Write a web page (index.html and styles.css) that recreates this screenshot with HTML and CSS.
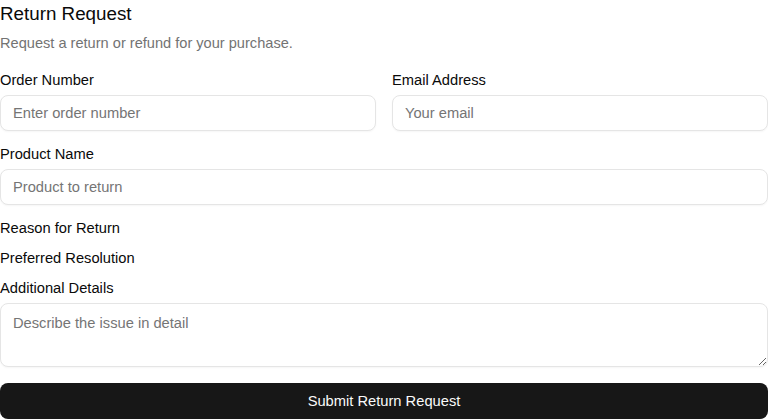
FILE: index.html
```html
<!DOCTYPE html>
<html>
<head>
<meta charset="utf-8">
<link rel="stylesheet" href="styles.css">
</head>
<body>
<form class="form">
  <h1 class="title">Return Request</h1>
  <p class="subtitle">Request a return or refund for your purchase.</p>
  <div class="row">
    <div class="field">
      <label class="label">Order Number</label>
      <input class="input" type="text" placeholder="Enter order number">
    </div>
    <div class="field">
      <label class="label">Email Address</label>
      <input class="input" type="email" placeholder="Your email">
    </div>
  </div>
  <div class="field">
    <label class="label">Product Name</label>
    <input class="input" type="text" placeholder="Product to return">
  </div>
  <div class="field">
    <label class="label label-only">Reason for Return</label>
  </div>
  <div class="field">
    <label class="label label-only">Preferred Resolution</label>
  </div>
  <div class="field">
    <label class="label">Additional Details</label>
    <textarea class="input textarea" placeholder="Describe the issue in detail"></textarea>
  </div>
  <button class="submit" type="button">Submit Return Request</button>
</form>
</body>
</html>
```

FILE: styles.css
```css
* { box-sizing: border-box; }
html, body { margin: 0; padding: 0; background: #fff; }
body {
  font-family: "Liberation Sans", Arial, sans-serif;
  color: #0a0a0a;
}
.form {
  display: flex;
  flex-direction: column;
  gap: 14px;
}
.title {
  margin: 0;
  font-size: 18.8px;
  line-height: 28px;
  font-weight: 400;
}
.subtitle {
  margin: -9px 0 4px;
  font-size: 14.6px;
  line-height: 20px;
  color: #737373;
}
.row {
  display: grid;
  grid-template-columns: 1fr 1fr;
  gap: 16px;
}
.field {
  display: flex;
  flex-direction: column;
  gap: 6px;
}
.label {
  font-size: 14.7px;
  line-height: 17px;
  padding-top: 1px;
}
.label-only {
  line-height: 16px;
  padding-top: 1px;
  margin-bottom: -1px;
}
.input {
  height: 36px;
  width: 100%;
  border: 1px solid #e5e5e5;
  border-radius: 8px;
  padding: 0 12px;
  font-family: "Liberation Sans", Arial, sans-serif;
  font-size: 14.7px;
  color: #0a0a0a;
  background: #fff;
  box-shadow: 0 1px 2px rgba(0,0,0,0.04);
  outline: none;
}
.input::placeholder { color: #757575; }
.textarea {
  height: 64px;
  padding: 9px 12px;
  line-height: 20px;
  resize: vertical;
  display: block;
}
.submit {
  margin-top: 2px;
  height: 36px;
  width: 100%;
  border: none;
  border-radius: 8px;
  background: #171717;
  color: #fafafa;
  font-family: "Liberation Sans", Arial, sans-serif;
  font-size: 14.7px;
  font-weight: 500;
}
```
